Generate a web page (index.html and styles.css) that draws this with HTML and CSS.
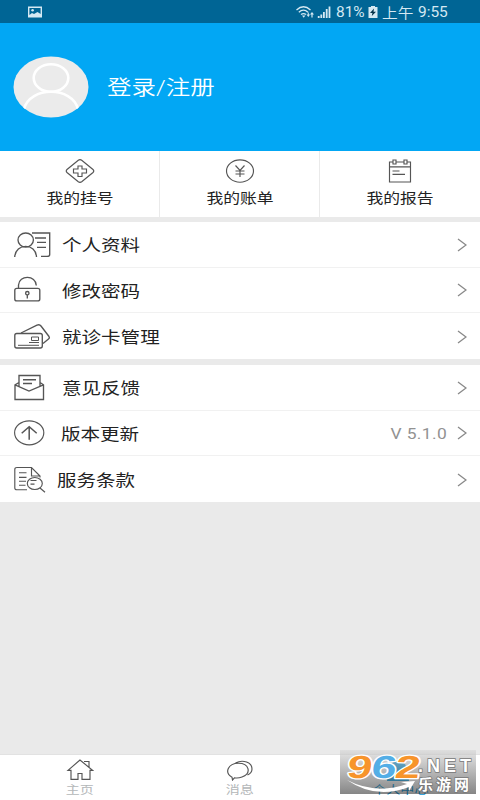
FILE: index.html
```html
<!DOCTYPE html>
<html lang="zh-CN">
<head>
<meta charset="UTF-8">
<title>个人中心</title>
<link rel="stylesheet" href="styles.css">
</head>
<body>
<div class="app">
  <div class="status">
    <svg class="photo" width="15" height="12" viewBox="0 0 15 12"><path fill="#d5e9f3" fill-rule="evenodd" d="M0 .5H14V11.5H0ZM1.4 1.9V9L4 7L6 8L9.5 6L12.6 8V1.9Z"/><circle cx="4.6" cy="4.2" r="1.3" fill="#d5e9f3"/></svg>
    <div class="status-right">
      <svg width="36" height="14" viewBox="0 0 36 14"><g fill="none" stroke="#d5e9f3" stroke-width="1.3"><path d="M.5 5Q7.5-1.5 14.5 5M2.8 7.3Q7.5 3 12 7.3M5 9.6Q7.5 7.5 10 9.6"/></g><path fill="#d5e9f3" d="M6 10.5h3.4l-1.7 2.3zM10.5 9.5h1.3v-2h1v2h1.3l-1.8 2.5zM14 9.5l2-2.5 2 2.5h-1.4v3h-1.2v-3zM21.8 13v-2h1.8v2zM24.4 13V9.5h1.8V13zM27 13V7h1.8v6zM29.8 13V4h1.8v9zM32.6 13V1.5h1.8V13z"/></svg>
      <span class="st percent">81%</span>
      <svg class="battery" width="10" height="12" viewBox="0 0 10 12"><path fill="#d5e9f3" d="M3 0h4v1h2.5v11h-9V1H3z"/><path fill="#06334a" d="M6 2.5 2 7h2.4L3.8 10 8 5.7H5.5z"/></svg>
      <span class="st ampm">上午</span>
      <span class="st time">9:55</span>
    </div>
  </div>
  <header class="profile">
    <svg width="76" height="62" viewBox="0 0 76 62"><defs><clipPath id="face"><ellipse cx="38" cy="31" rx="37.5" ry="30.5"/></clipPath></defs><ellipse cx="38" cy="31" rx="37.5" ry="30.5" fill="#ebebeb"/><g clip-path="url(#face)" fill="none" stroke="#fff" stroke-width="2.6"><ellipse cx="38" cy="22" rx="17.3" ry="13.8"/><path d="M11 53C17 30 59 30 65 53"/></g></svg>
    <span class="wide login">登录/注册</span>
  </header>
  <div class="tabs">
    <div class="tab"><svg width="30" height="24" viewBox="0 0 30 24" class="line"><path d="M13.3 1.2Q15 0 16.7 1.2L28 10.5Q29.5 12 28 13.5L16.7 22.8Q15 24 13.3 22.8L2 13.5Q.5 12 2 10.5ZM13 7h4v3h4.5v4H17v3.5h-4V14H8.5v-4H13Z"/></svg><span class="wide">我的挂号</span></div>
    <div class="tab"><svg width="30" height="24" viewBox="0 0 30 24" class="line"><ellipse cx="15" cy="12" rx="13.5" ry="11.2"/><path d="m10.5 6.5 4.5 5 4.5-5M15 11.5V18M10.5 12h9M10.5 15h9"/></svg><span class="wide">我的账单</span></div>
    <div class="tab"><svg width="30" height="24" viewBox="0 0 30 24" class="line"><path d="M8 3H4.5v20h21V3H22M11 3h8M4.5 7.8h21M8 1h3v4H8zM19 1h3v4h-3zM7.5 12h7M7.5 15.3H20"/></svg><span class="wide">我的报告</span></div>
  </div>
  <div class="group">
    <div class="row"><svg width="40" height="28" viewBox="0 0 40 28" class="line bold"><ellipse cx="11.7" cy="9" rx="7.7" ry="7"/><path d="M.7 26C1.5 11.8 22 11.8 22.5 26M18 2H35.7V23.5Q35.7 25.4 33 25.4H27M21 7H32M23 11.3H32M23 16.3H32"/></svg><span class="wide label">个人资料</span><svg class="chev" width="10" height="14" viewBox="0 0 10 14"><path d="m1 1 8 6-8 6"/></svg></div>
    <div class="row"><svg width="40" height="28" viewBox="0 0 40 28" class="line bold"><rect x=".8" y="12.3" width="25" height="12.6" rx="2"/><path d="M4.5 12V9C5-1.2 22-1.2 22.3 9.5M13.3 19v3.5"/><circle cx="13.3" cy="17.2" r="1.7"/></svg><span class="wide label">修改密码</span><svg class="chev" width="10" height="14" viewBox="0 0 10 14"><path d="m1 1 8 6-8 6"/></svg></div>
    <div class="row"><svg width="40" height="28" viewBox="0 0 40 28" class="line bold"><rect x=".8" y="10.5" width="27.5" height="14.5" rx="2"/><path d="M7 10 23 2.2Q25.5 1 27 3L35 13.5Q36 15 34.5 16L29 20.5"/><path stroke-width="1" d="M17.5 14h7v3.5h-7zM15 19.5h10M4 22.3H25"/></svg><span class="wide label">就诊卡管理</span><svg class="chev" width="10" height="14" viewBox="0 0 10 14"><path d="m1 1 8 6-8 6"/></svg></div>
  </div>
  <div class="group second">
    <div class="row"><svg width="40" height="28" viewBox="0 0 40 28" class="line bold"><path d="M5 8.5 1 10.8V25.5H29.5V10.8L26 8.5M1 10.8 15 17 29.5 10.8M5 12.5V1.5H26V12.5M9 5.7H22M9 9.5H18"/></svg><span class="wide label l1">意见反馈</span><svg class="chev" width="10" height="14" viewBox="0 0 10 14"><path d="m1 1 8 6-8 6"/></svg></div>
    <div class="row"><svg width="40" height="28" viewBox="0 0 40 28" class="line"><ellipse cx="15.2" cy="13.8" rx="14.6" ry="12"/><path stroke-width="1.5" d="M15.2 20.8V7.8M7.7 14.3l7.5-6.5 7.5 6.5"/></svg><span class="wide label l2">版本更新</span><span class="wide version">V 5.1.0</span><svg class="chev" width="10" height="14" viewBox="0 0 10 14"><path d="m1 1 8 6-8 6"/></svg></div>
    <div class="row"><svg width="40" height="28" viewBox="0 0 40 28" class="line"><path d="M13 23.7H3Q.8 23.7.8 21.9V3.5Q.8 1.5 3 1.5H17.5L26 10V11.5M17.5 1.5V10H26M5 6.7h7.5M5 11.3h7.5M5 15.2h7M5 19.2h6.5M16.5 14.5h6M16.5 18.1h4"/><ellipse cx="20.8" cy="17.5" rx="7.5" ry="6"/><path d="m26 22 5 4.3"/></svg><span class="wide label l3">服务条款</span><svg class="chev" width="10" height="14" viewBox="0 0 10 14"><path d="m1 1 8 6-8 6"/></svg></div>
  </div>
  <main class="blank"></main>
  <nav class="nav">
    <div class="item"><svg width="28" height="22" viewBox="0 0 28 22" class="line"><path d="M14 1 2 11.3H5V20.3H12V14.5H16V20.3H24V11.3H26.5ZM18 2.5h5V8"/></svg><span class="wide">主页</span></div>
    <div class="item"><svg width="28" height="22" viewBox="0 0 28 22" class="line"><path d="M6 18.2C-2 13.5 2 4.2 12.5 4.2S26 14.3 16 18Q12 19.5 8.5 18.8L6.5 21ZM9.5 4C17 0 26 3.5 26 10Q26 14 21.5 16"/></svg><span class="wide">消息</span></div>
    <div class="item active"><svg width="28" height="22" viewBox="0 0 28 22"><ellipse cx="12" cy="8" rx="8" ry="6"/><path d="M1 22Q1 14 12 14T23 22Z"/></svg><span class="wide">个人中心</span></div>
  </nav>
  <div class="watermark">
    <svg width="136" height="44" viewBox="0 0 136 44">
      <g transform="translate(5 0) skewX(-8)" font-family="Liberation Sans, sans-serif" font-weight="bold" font-size="32" stroke="#fff" stroke-width="2.5" paint-order="stroke" stroke-linejoin="round">
        <text x="5" y="27.5" fill="#f7942b" textLength="25" lengthAdjust="spacingAndGlyphs">9</text><text x="29" y="27.5" fill="#53aee6" textLength="25" lengthAdjust="spacingAndGlyphs">6</text><text x="53" y="27.5" fill="#f7942b" textLength="25" lengthAdjust="spacingAndGlyphs">2</text>
      </g>
      <path d="M7 30Q36 45 67 34L61 32 75 31 69 41V37Q36 50 7 30Z" fill="#fff"/>
      <g fill="#fff" stroke="#777" stroke-width="1.5" paint-order="stroke" font-weight="bold">
        <text x="78" y="22" font-family="Liberation Sans, sans-serif" font-size="18" textLength="53">.NET</text>
        <text x="78" y="40" font-family="Noto Sans CJK SC, sans-serif" font-size="15" textLength="51">乐游网</text>
      </g>
    </svg>
  </div>
</div>
</body>
</html>
```
FILE: styles.css
```css
* { box-sizing: border-box; }
body { margin: 0; font-family: Roboto, "Noto Sans CJK SC", sans-serif; color: #222; }
svg { display: block; flex: none; }
.app { position: relative; width: 480px; height: 800px; display: flex; flex-direction: column; background: #eaeaea; overflow: hidden; }
.status { height: 23px; flex: none; background: #006595; display: flex; align-items: center; justify-content: space-between; padding: 0 29px 0 28px; color: #d5e9f3; }
.status-right { display: flex; align-items: center; width: 155px; font-size: 13.8px; line-height: 22px; }
.st { display: block; transform: scaleX(1.12); transform-origin: left; white-space: nowrap; flex: none; }
.percent { width: 32px; margin-left: 4px; }
.ampm { width: 36px; margin-left: 4px; font-family: "Noto Sans CJK SC", sans-serif; font-weight: 350; font-size: 14px; }
.profile { height: 128px; flex: none; background: #02a7f4; display: flex; align-items: center; padding: 0 0 1px 13px; color: #fff; }
.wide { display: block; transform: scaleX(1.2); white-space: nowrap; }
.login { transform-origin: left; margin-left: 18px; font-size: 20.4px; font-weight: 350; line-height: 28px; padding-top: 2px; }
.tabs { height: 66px; flex: none; display: grid; grid-template-columns: repeat(3, 1fr); background: #fff; }
.tab { display: flex; flex-direction: column; align-items: center; padding-top: 8px; font-size: 14px; line-height: 20px; gap: 5px; border-right: 1px solid #eaeaea; }
.tab:last-child { border-right: 0; }
.line { fill: none; stroke: #555; stroke-width: 1.15; }
.bold { stroke-width: 1.35; }
.group { margin-top: 5px; height: 137px; flex: none; display: grid; grid-template-rows: repeat(3, 1fr); background: #fff; }
.second { margin-top: 6px; }
.row { display: flex; align-items: center; padding: 1px 13px 0 14px; border-bottom: 1px solid #f1f1f1; }
.row:last-child { border-bottom: 0; }
.label { transform-origin: left; margin-left: 8px; padding-top: 3px; font-size: 16.3px; line-height: 24px; }
.l1 { margin-left: 7.5px; }
.l2 { margin-left: 7px; }
.l3 { margin-left: 3px; }
.chev { margin-left: auto; fill: none; stroke: #888; stroke-width: 1.3; }
.version { margin-left: auto; transform-origin: right; padding-top: 3px; font-size: 14.5px; color: #929292; letter-spacing: .3px; }
.version + .chev { margin-left: 10px; }
.blank { flex: 1; }
.nav { height: 46px; flex: none; display: grid; grid-template-columns: repeat(3, 1fr); background: #fff; border-top: 1px solid #e2e2e2; color: #b4b7b9; }
.item { display: flex; flex-direction: column; align-items: center; padding-top: 4px; font-size: 11.7px; line-height: 18px; }
.active { color: #0093d8; fill: #0099e0; }
.watermark { position: absolute; left: 340px; top: 750px; width: 136px; height: 44px; background: linear-gradient(rgba(215,215,215,.6), rgba(35,35,35,.55)); }
```
